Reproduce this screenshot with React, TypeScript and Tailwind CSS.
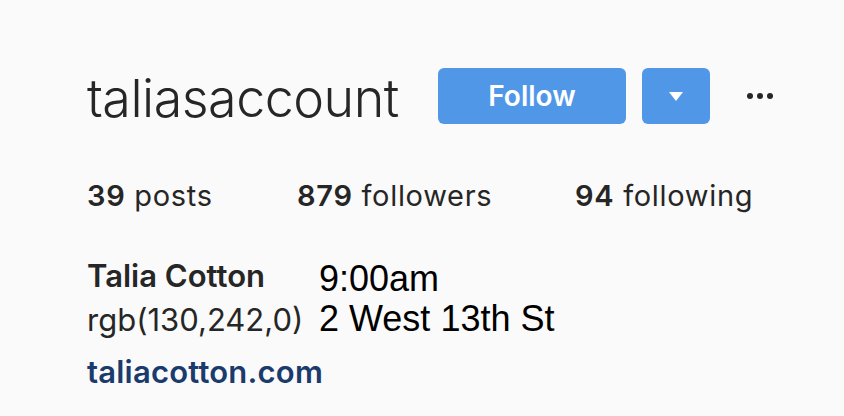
const stats = [
  { value: "39", label: "posts" },
  { value: "879", label: "followers" },
  { value: "94", label: "following" },
];

export default function App() {
  return (
    <div
      className="w-[844px] h-[416px] bg-[#fafafa] text-[#262626] pl-[87px] pt-[64px]"
      style={{ fontFamily: "Inter, 'Noto Sans', sans-serif" }}
    >
      {/* Header */}
      <div className="flex items-center h-[64px]">
        <h1 className="text-[52px] font-light leading-none tracking-[-0.5px] w-[351px] pt-[6px]">
          taliasaccount
        </h1>
        <button className="w-[188px] h-[56px] rounded-[6px] bg-[#5097e8] text-white text-[28px] font-semibold">
          Follow
        </button>
        <button className="ml-[16px] w-[68px] h-[56px] rounded-[6px] bg-[#5097e8] flex items-center justify-center">
          <span className="block w-0 h-0 border-l-[7px] border-r-[7px] border-t-[9px] border-l-transparent border-r-transparent border-t-white" />
        </button>
        <div className="ml-[37px] flex gap-[4px]">
          <span className="w-[6px] h-[6px] rounded-full bg-[#262626]" />
          <span className="w-[6px] h-[6px] rounded-full bg-[#262626]" />
          <span className="w-[6px] h-[6px] rounded-full bg-[#262626]" />
        </div>
      </div>

      {/* Stats */}
      <div className="flex mt-[53px] text-[29px] leading-none tracking-[0.7px]">
        {stats.map((s, i) => (
          <div key={s.label} className={i === 0 ? "w-[210px]" : i === 1 ? "w-[278px]" : ""}>
            <span className="font-semibold">{s.value}</span> {s.label}
          </div>
        ))}
      </div>

      {/* Bio */}
      <div className="flex mt-[44px]">
        <div className="w-[232px] flex flex-col">
          <span className="text-[31px] font-semibold leading-[44px]">Talia Cotton</span>
          <span className="text-[31px] leading-[44px]">rgb(130,242,0)</span>
          <span className="text-[31px] font-semibold leading-[60px] text-[#1b3b6d] tracking-[0.2px]">taliacotton.com</span>
        </div>
        <div
          className="flex flex-col mt-[5px] text-black text-[36px] leading-[40px]"
          style={{ fontFamily: "'Liberation Sans', Arial, sans-serif" }}
        >
          <span>9:00am</span>
          <span>2 West 13th St</span>
        </div>
      </div>
    </div>
  );
}
